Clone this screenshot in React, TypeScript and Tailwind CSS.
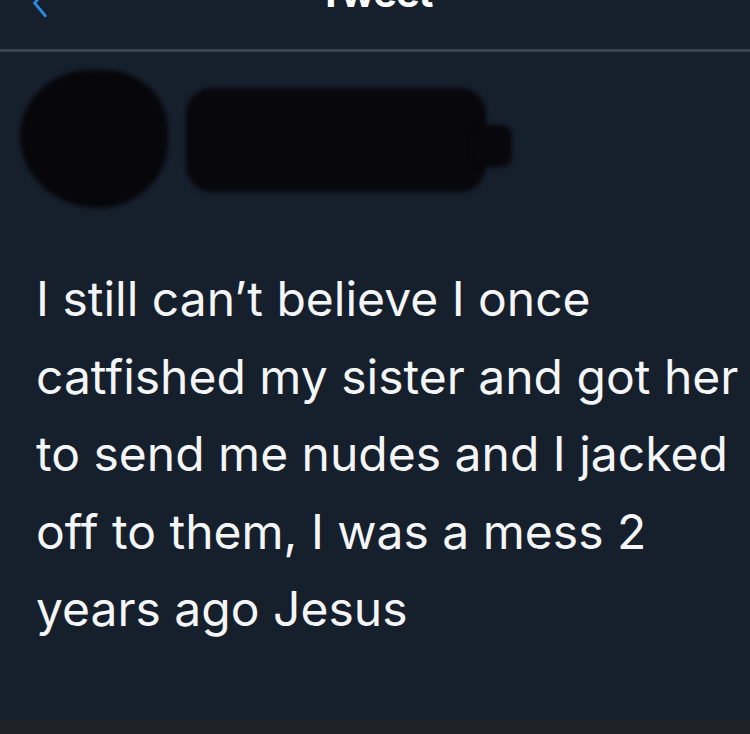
export default function App() {
  const lines = [
    "I still can\u2019t believe I once",
    "catfished my sister and got her",
    "to send me nudes and I jacked",
    "off to them, I was a mess 2",
    "years ago Jesus",
  ];

  return (
    <div className="w-[750px] h-[734px] overflow-hidden bg-[#161f2c] flex flex-col font-['Inter','Liberation_Sans',sans-serif]">
      {/* Header */}
      <div className="relative h-[52px] shrink-0 border-b-[3px] border-[#39434f]">
        <svg className="absolute left-[24px] top-[-14px] w-[34px] h-[34px]" viewBox="0 0 24 24" fill="none">
          <path d="M15 3 L7.5 12 L15 21" stroke="#2a8ae0" strokeWidth="2" strokeLinecap="round" />
        </svg>
        <div className="absolute left-0 right-0 top-[-27px] text-center text-white font-bold text-[40px] leading-[40px] tracking-tight">
          Tweet
        </div>
      </div>

      {/* Redacted author */}
      <div className="flex items-start pl-[20px] pt-[18px] gap-[18px] h-[176px] shrink-0">
        <div className="w-[148px] h-[138px] rounded-[50%_45%_50%_55%] bg-[#07070b] blur-[2px]" />
        <div className="mt-[18px] flex items-center">
          <div className="w-[300px] h-[104px] rounded-[26px] bg-[#08070c] blur-[2px]" />
          <div className="w-[40px] h-[42px] -ml-[14px] mt-[12px] rounded-[10px] bg-[#08070c] blur-[2px]" />
        </div>
      </div>

      {/* Tweet text */}
      <div className="pl-[36px] pt-[32px] flex-1">
        {lines.map((l) => (
          <div key={l} className="text-[#f4f5f6] text-[48px] leading-[77.5px] whitespace-nowrap">
            {l}
          </div>
        ))}
      </div>

      {/* Bottom edge */}
      <div className="h-[14px] shrink-0 bg-[#1e2226]" />
    </div>
  );
}
